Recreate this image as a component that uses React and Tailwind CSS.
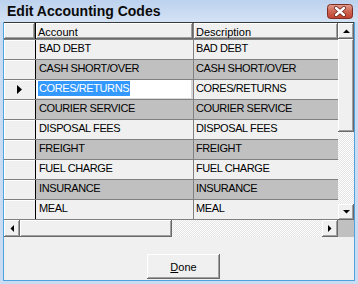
const rows = [
  "BAD DEBT",
  "CASH SHORT/OVER",
  "CORES/RETURNS",
  "COURIER SERVICE",
  "DISPOSAL FEES",
  "FREIGHT",
  "FUEL CHARGE",
  "INSURANCE",
  "MEAL",
];

const selected = 2;

// classic 3d button face
const raised =
  "bg-[#f0f0f0] shadow-[inset_-1px_-1px_0_#696969,inset_1px_1px_0_#ffffff,inset_-2px_-2px_0_#a0a0a0]";

const Arrow = ({ dir }) => {
  const pts = {
    up: "0,4 7,4 3.5,0.5",
    down: "0,0 7,0 3.5,3.5",
    left: "4,0 4,7 0.5,3.5",
    right: "0,0 0,7 3.5,3.5",
  }[dir];
  const vertical = dir === "up" || dir === "down";
  return (
    <svg width={vertical ? 7 : 4} height={vertical ? 4 : 7}>
      <polygon points={pts} fill="#000" />
    </svg>
  );
};

const CloseButton = () => (
  <svg width="26" height="15" className="mt-[4px] mr-[1px]">
    <defs>
      <linearGradient id="closeRed" x1="0" y1="0" x2="0" y2="1">
        <stop offset="0%" stopColor="#e3a091" />
        <stop offset="45%" stopColor="#cf6a57" />
        <stop offset="100%" stopColor="#c0402c" />
      </linearGradient>
    </defs>
    <rect x="0.5" y="0.5" width="25" height="14" rx="3" fill="url(#closeRed)" stroke="#7d2d24" />
    <path d="M9 4 L17 11 M17 4 L9 11" stroke="#6b2119" strokeWidth="4" strokeLinecap="round" />
    <path d="M9 4 L17 11 M17 4 L9 11" stroke="#ffffff" strokeWidth="2.4" strokeLinecap="round" />
  </svg>
);

export default function App() {
  return (
    <div className="w-[358px] h-[284px] flex flex-col bg-[#c9dcf2] font-['Liberation_Sans',Arial,sans-serif] text-black select-none">
      {/* Title bar */}
      <div className="h-[22px] shrink-0 flex items-start bg-gradient-to-b from-[#bcd2ee] to-[#d4e2f4]">
        <span className="pl-[7px] pt-[3px] text-[14px] leading-[16px] font-bold text-[#0b0b0b]">
          Edit Accounting Codes
        </span>
        <div className="ml-auto mr-[4px]">
          <CloseButton />
        </div>
      </div>

      {/* Client area */}
      <div className="flex-1 flex flex-col mx-[3px] mb-[3px] border border-t-0 border-[#4fa2da] bg-[#f0f0f0]">
        {/* Grid */}
        <div className="flex h-[198px] border-t border-[#3a3a3a]">
          <div className="w-[334px] flex flex-col overflow-hidden bg-[#c0c0c0]">
            {/* Header */}
            <div className="flex h-[17px] shrink-0 border-b border-[#808080] text-[11px] leading-[12px]">
              <div className={`w-[32px] border-r border-black ${raised}`} />
              <div className={`w-[158px] pl-[2px] pt-[3px] border-r border-[#808080] ${raised}`}>
                Account
              </div>
              <div className={`flex-1 pl-[2px] pt-[3px] ${raised}`}>Description</div>
            </div>

            {rows.map((name, i) => (
              <div
                key={name}
                className={`flex h-[20px] shrink-0 border-b border-[#808080] text-[11px] leading-[12px] tracking-[-0.4px] ${
                  i % 2 === 0 ? "bg-[#f0f0f0]" : "bg-[#c0c0c0]"
                }`}
              >
                <div className="w-[32px] flex items-center pl-[13px] border-r border-black bg-[#f0f0f0] shadow-[inset_1px_1px_0_#ffffff]">
                  {i === selected && (
                    <svg width="6" height="10">
                      <polygon points="0,0 0,9 5,4.5" fill="#000" />
                    </svg>
                  )}
                </div>
                {i === selected ? (
                  <div className="w-[158px] flex items-start border-r border-[#808080] bg-white shadow-[inset_-2px_-1px_0_#d8d8d8]">
                    <span className="mt-[1px] ml-[2px] pl-[1px] pr-[1px] pt-[1px] pb-[2px] bg-[#3399ff] text-white">
                      {name}
                    </span>
                  </div>
                ) : (
                  <div className="w-[158px] pl-[3px] pt-[2px] border-r border-[#808080]">{name}</div>
                )}
                <div className="flex-1 pl-[2px] pt-[2px]">{name}</div>
              </div>
            ))}
          </div>

          {/* Vertical scrollbar */}
          <div className="w-[16px] flex flex-col">
            <div className={`h-[16px] flex items-center justify-center ${raised}`}>
              <Arrow dir="up" />
            </div>
            <div className={`h-[93px] ${raised}`} />
            <div className="flex-1 bg-[repeating-conic-gradient(#e3e3e3_0%_25%,#ffffff_0%_50%)] bg-[length:2px_2px]" />
            <div className={`h-[16px] flex items-center justify-center ${raised}`}>
              <Arrow dir="down" />
            </div>
          </div>
        </div>

        {/* Horizontal scrollbar */}
        <div className="flex h-[17px]">
          <div className="w-[334px] flex">
            <div className={`w-[16px] flex items-center justify-center ${raised}`}>
              <Arrow dir="left" />
            </div>
            <div className={`w-[152px] ${raised}`} />
            <div className="flex-1 bg-[repeating-conic-gradient(#e3e3e3_0%_25%,#ffffff_0%_50%)] bg-[length:2px_2px]" />
            <div className={`w-[16px] flex items-center justify-center ${raised}`}>
              <Arrow dir="right" />
            </div>
          </div>
          <div className="flex-1 bg-[#c0c0c0]" />
        </div>

        {/* Footer */}
        <div className="flex-1 pt-[17px] pl-[143px]">
          <button
            className={`w-[73px] h-[25px] text-[11px] leading-[12px] flex items-center justify-center ${raised}`}
          >
            <span>
              <span className="underline">D</span>one
            </span>
          </button>
        </div>
      </div>
    </div>
  );
}
